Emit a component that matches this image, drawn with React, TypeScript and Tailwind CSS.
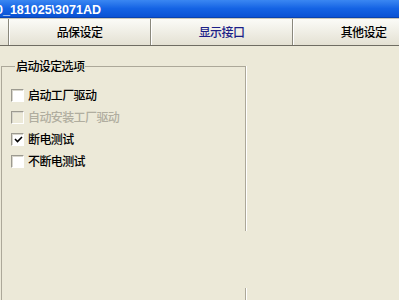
import React from "react";

function Check({ checked, disabled }: { checked?: boolean; disabled?: boolean }) {
  return (
    <div className="w-[13px] h-[13px] border-t border-l border-t-[#9c9a90] border-l-[#9c9a90] border-r border-b border-r-[#ffffff] border-b-[#ffffff] flex-none">
      <div
        className={
          "w-full h-full border-t border-l border-t-[#d8d6cc] border-l-[#d8d6cc] flex items-center justify-center " +
          (disabled ? "bg-[#ece9d8]" : "bg-white")
        }
      >
        {checked && (
          <svg width="9" height="9" viewBox="0 0 9 9">
            <path d="M1 4 L3.5 6.5 L8 2" stroke="#000" strokeWidth="1.6" fill="none" />
          </svg>
        )}
      </div>
    </div>
  );
}

function Row({ label, checked, disabled }: { label: string; checked?: boolean; disabled?: boolean }) {
  return (
    <div className="h-[22px] flex items-center gap-[4px]">
      <Check checked={checked} disabled={disabled} />
      <span className={disabled ? "text-[#b0ad9f]" : "text-black"}>{label}</span>
    </div>
  );
}

function Tab({ label, active }: { label: string; active?: boolean }) {
  return (
    <div
      className={
        "w-[142px] flex-none h-full flex items-center justify-center border-r border-r-[#8a887c] shadow-[inset_1px_0_0_#ffffff] bg-gradient-to-b from-[#fbfbf7] to-[#e4e1d3] " +
        (active ? "text-[#1c1f88]" : "text-black")
      }
    >
      {label}
    </div>
  );
}

export default function App() {
  return (
    <div
      className="w-[399px] h-[300px] overflow-hidden bg-[#ece9d8] flex flex-col text-[12px] tracking-[-0.6px] font-medium"
      style={{ fontFamily: '"Noto Sans CJK SC", "Noto Sans", sans-serif' }}
    >
      <div className="h-[18px] flex-none bg-gradient-to-b from-[#3a87f2] via-[#1463e4] to-[#0a52d4] border-b border-b-[#0842b0] flex items-end overflow-hidden">
        <span
          className="ml-[-4px] pb-[1px] text-white font-bold text-[12.5px] leading-none tracking-normal"
          style={{ fontFamily: '"Liberation Sans", Arial, sans-serif' }}
        >
          0_181025\3071AD
        </span>
      </div>
      <div className="h-[28px] flex-none flex border-t border-t-[#c9c6b8] border-b border-b-[#6f6d63] ml-[-133px]">
        <Tab label="" />
        <Tab label="品保设定" />
        <Tab label="显示接口" active />
        <Tab label="其他设定" />
      </div>
      <div className="flex-1 flex flex-col">
        <fieldset className="ml-[1px] mt-[13px] w-[245px] h-[172px] border-t border-l border-r border-[#aca899] shadow-[1px_0_0_#ffffff] pl-[9px]">
          <legend className="ml-[4px] px-[1px] leading-[14px]">启动设定选项</legend>
          <div className="pt-[11px] flex flex-col">
            <Row label="启动工厂驱动" />
            <Row label="自动安装工厂驱动" disabled />
            <Row label="断电测试" checked />
            <Row label="不断电测试" />
          </div>
        </fieldset>
        <div className="ml-[1px] h-[57px] border-l border-[#aca899]" />
        <div className="ml-[1px] w-[245px] flex-1 border-l border-r border-[#aca899] shadow-[1px_0_0_#ffffff]" />
      </div>
    </div>
  );
}
